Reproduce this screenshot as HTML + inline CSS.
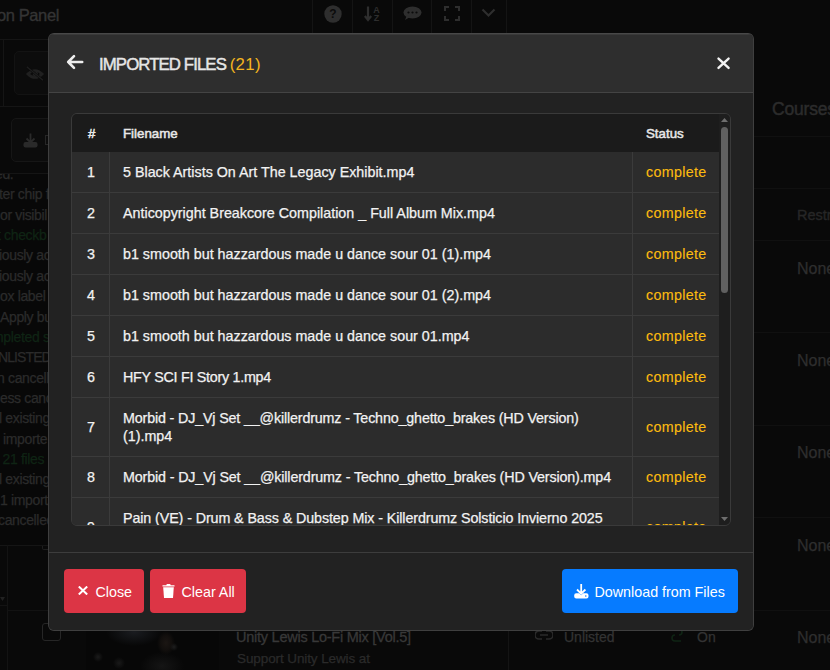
<!DOCTYPE html>
<html><head><meta charset="utf-8">
<style>
*{box-sizing:border-box;margin:0;padding:0}
html,body{width:830px;height:670px;overflow:hidden;background:#090909;font-family:"Liberation Sans",sans-serif}
.bg{position:absolute;left:0;top:0;width:830px;height:670px;overflow:hidden}
.abs{position:absolute;white-space:nowrap}
.log{position:absolute;left:0;top:174px;height:371px;background:#080808;width:48px;font-size:14px;line-height:20.37px;color:#2b2b2b;letter-spacing:-0.35px;-webkit-text-stroke:0.25px currentColor;white-space:nowrap;overflow:hidden}
.log div{height:20.37px}
.g{color:#0f2414}
.modal{position:absolute;left:48px;top:33px;width:706px;height:598px;border:1px solid #3f3f3f;border-top-color:#484848;border-radius:6px;background:#222;overflow:hidden}
.mh{position:absolute;left:0;top:0;width:704px;height:59px;background:#2e2e2e;border-bottom:1px solid #444;box-shadow:inset 0 1px 0 #3a3a3a}
.mf{position:absolute;left:0;top:518px;width:704px;height:79px;border-top:1px solid #3d3d3d;background:#222}
.tbl{position:absolute;left:22px;top:79px;width:660px;height:413px;border:1px solid #3a3a3a;border-radius:6px;overflow:hidden;background:#2b2b2b}
.th{position:absolute;left:0;top:0;width:647px;height:38px;background:#1b1b1b;color:#e8e8e8;font-size:13.3px;line-height:16px;-webkit-text-stroke:0.5px currentColor}
.row{position:absolute;left:0;width:647px;height:41px;background:#2c2c2c;border-bottom:1px solid #3b3b3b;color:#f2f2f2;font-size:14.3px;line-height:18px;-webkit-text-stroke:0.25px currentColor}
.row.tall{height:59px}
.c1{position:absolute;left:0;top:0;width:38px;height:100%;border-right:1px solid #3b3b3b}
.c1 span{position:absolute;left:15px;top:11px}
.fn{position:absolute;left:51px;top:11px;white-space:nowrap}
.c3{position:absolute;left:560px;top:0;width:88px;height:100%;border-left:1px solid #3b3b3b}
.c3 span{position:absolute;left:13px;top:11px;color:#fdbc0f;letter-spacing:0.3px;-webkit-text-stroke:0.1px currentColor}
.tall .c1 span,.tall .c3 span{top:20px}
.sb{position:absolute;left:647px;top:0;width:11px;height:411px;background:#1e1e1e}
.btn{position:absolute;top:16px;height:44px;border-radius:4px;color:#fff;font-size:14.3px;line-height:18px}
</style></head><body>
<div class="bg">
  <!-- top header of page -->
  <div class="abs" style="left:-3px;top:6px;font-size:16.5px;line-height:19px;color:#343434;letter-spacing:-0.4px;-webkit-text-stroke:0.35px #343434">on Panel</div>
  <div class="abs" style="left:312px;top:0;width:1px;height:33px;background:#141414"></div>
  <div class="abs" style="left:352px;top:0;width:1px;height:33px;background:#141414"></div>
  <div class="abs" style="left:392px;top:0;width:1px;height:33px;background:#141414"></div>
  <div class="abs" style="left:431px;top:0;width:1px;height:33px;background:#141414"></div>
  <div class="abs" style="left:471px;top:0;width:1px;height:33px;background:#141414"></div>
  <div class="abs" style="left:506px;top:0;width:1px;height:33px;background:#141414"></div>
  <svg class="abs" style="left:324px;top:5px" width="18" height="18" viewBox="0 0 18 18"><circle cx="9" cy="9" r="8.7" fill="#2e2e2e"/><text x="9" y="13.2" text-anchor="middle" font-family="Liberation Sans" font-weight="bold" font-size="12" fill="#0b0b0b">?</text></svg>
  <svg class="abs" style="left:364px;top:6px" width="18" height="16" viewBox="0 0 18 16"><path d="M4 0.5 V14 M0.8 10 L4 14 L7.2 10" stroke="#2e2e2e" stroke-width="2.2" fill="none"/><text x="12.5" y="7.3" text-anchor="middle" font-family="Liberation Sans" font-weight="bold" font-size="9" fill="#2e2e2e">A</text><text x="12.5" y="15" text-anchor="middle" font-family="Liberation Sans" font-weight="bold" font-size="9" fill="#2e2e2e">Z</text></svg>
  <svg class="abs" style="left:403px;top:6px" width="19" height="15" viewBox="0 0 19 15"><ellipse cx="9.5" cy="6.5" rx="9" ry="6" fill="#2e2e2e"/><path d="M2 14 L4 9 L7 11 Z" fill="#2e2e2e"/><circle cx="5.5" cy="6.5" r="1.1" fill="#0b0b0b"/><circle cx="9.5" cy="6.5" r="1.1" fill="#0b0b0b"/><circle cx="13.5" cy="6.5" r="1.1" fill="#0b0b0b"/></svg>
  <svg class="abs" style="left:444px;top:6px" width="16" height="15" viewBox="0 0 16 15"><path d="M1 5 V1 H5 M11 1 H15 V5 M15 10 V14 H11 M5 14 H1 V10" stroke="#2e2e2e" stroke-width="2" fill="none"/></svg>
  <svg class="abs" style="left:481px;top:8px" width="15" height="10" viewBox="0 0 15 10"><path d="M1.5 1.5 L7.5 7.5 L13.5 1.5" stroke="#2e2e2e" stroke-width="2.2" fill="none"/></svg>

  <!-- left panel -->
  <div class="abs" style="left:0;top:39px;width:48px;height:1px;background:#151515"></div>
  <div class="abs" style="left:3px;top:39px;width:1px;height:67px;background:#151515"></div>
  <div class="abs" style="left:0;top:106px;width:48px;height:1px;background:#151515"></div>
  <div class="abs" style="left:14px;top:51px;width:60px;height:44px;border:1px solid #131313;border-radius:5px;background:#0c0c0c"></div>
  <svg class="abs" style="left:26px;top:66px" width="18" height="15" viewBox="0 0 18 15"><path d="M1.8 8 Q9 1 16.2 8 Q9 15 1.8 8 Z" stroke="#202020" stroke-width="2.6" fill="none"/><circle cx="9.5" cy="8" r="2.6" fill="#202020"/><path d="M0.8 0.8 L17 14.2" stroke="#0c0c0c" stroke-width="2.2"/><path d="M0.8 0.8 L17 14.2" stroke="#1f1f1f" stroke-width="1.2"/></svg>
  <div class="abs" style="left:11px;top:118px;width:60px;height:44px;border:1px solid #161616;border-radius:5px;background:#0c0c0c"></div>
  <svg class="abs" style="left:23px;top:133px" width="15" height="15" viewBox="0 0 15 15"><path d="M7.5 0.5 V9 M3.5 5.5 L7.5 9.5 L11.5 5.5" stroke="#2a2a2a" stroke-width="1.8" fill="none"/><rect x="0.5" y="9" width="14" height="5.5" rx="2" fill="#2a2a2a"/></svg>
  <div class="abs" style="left:45px;top:135px;width:4px;height:10px;border:1.5px solid #262626;border-right:none"></div>
  <div class="abs" style="left:0;top:173px;width:48px;height:1px;background:#151515"></div>
  <div class="log">
    <div style="margin-left:-5px;margin-top:-10px">ed.</div>
    <div style="margin-left:-1px">ter chip f</div>
    <div>or visibil</div>
    <div class="g" style="margin-left:-3px">t checkb</div>
    <div style="margin-left:-1px">iously ac</div>
    <div style="margin-left:-1px">iously ac</div>
    <div>ox label f</div>
    <div>Apply bu</div>
    <div class="g" style="margin-left:-8px">mpleted s</div>
    <div style="margin-left:-2px;letter-spacing:-0.9px">NLISTED</div>
    <div style="margin-left:-3px">n cancell</div>
    <div>ess canc</div>
    <div style="margin-left:-1px">l existing</div>
    <div style="margin-left:3px">importe</div>
    <div class="g" style="margin-left:-1px">&nbsp;21 files</div>
    <div style="margin-left:-1px">l existing</div>
    <div>1 import</div>
    <div style="margin-left:-2px">cancelled</div>
  </div>

  <div class="abs" style="left:0;top:545px;width:48px;height:1px;background:#151515"></div>
  <div class="abs" style="left:7px;top:545px;width:1px;height:125px;background:#131313"></div>
  <div class="abs" style="left:0;top:605px;width:7px;height:1px;background:#131313"></div>
  <div class="abs" style="left:7px;top:610px;width:41px;height:1px;background:#121212"></div>
  <svg class="abs" style="left:0;top:597px" width="5" height="4" viewBox="0 0 5 4"><path d="M0 0 H5 L2.5 4 Z" fill="#222"/></svg>
  <div class="abs" style="left:42px;top:546px;width:8px;height:4px;border:1px solid #1e1e1e;border-top:none;border-radius:0 0 0 2px"></div>
  <!-- right -->
  <div class="abs" style="left:772px;top:99px;font-size:17.5px;color:#2c2c2c;-webkit-text-stroke:0.45px #2c2c2c;letter-spacing:-0.2px">Courses</div>
  <div class="abs" style="left:754px;top:136px;width:76px;height:1px;background:#101010"></div>
  <div class="abs" style="left:754px;top:188px;width:76px;height:1px;background:#101010"></div>
  <div class="abs" style="left:797px;top:207px;font-size:14.5px;color:#262626;-webkit-text-stroke:0.4px #262626">Restr</div>
  <div class="abs" style="left:754px;top:240px;width:76px;height:1px;background:#101010"></div>
  <div class="abs" style="left:797px;top:260px;font-size:16px;color:#2e2e2e;-webkit-text-stroke:0.25px #2e2e2e">None</div>
  <div class="abs" style="left:754px;top:332px;width:76px;height:1px;background:#101010"></div>
  <div class="abs" style="left:797px;top:352px;font-size:16px;color:#2e2e2e;-webkit-text-stroke:0.25px #2e2e2e">None</div>
  <div class="abs" style="left:754px;top:425px;width:76px;height:1px;background:#101010"></div>
  <div class="abs" style="left:797px;top:444px;font-size:16px;color:#2e2e2e;-webkit-text-stroke:0.25px #2e2e2e">None</div>
  <div class="abs" style="left:754px;top:517px;width:76px;height:1px;background:#101010"></div>
  <div class="abs" style="left:797px;top:537px;font-size:16px;color:#2e2e2e;-webkit-text-stroke:0.25px #2e2e2e">None</div>
  <div class="abs" style="left:754px;top:610px;width:76px;height:1px;background:#101010"></div>
  <div class="abs" style="left:797px;top:629px;font-size:16px;color:#2e2e2e;-webkit-text-stroke:0.25px #2e2e2e">None</div>

  <!-- bottom row -->
  <div class="abs" style="left:42px;top:623px;width:19px;height:18px;border:1.5px solid #262626;border-radius:3px"></div>
  <div class="abs" style="left:86px;top:600px;width:133px;height:70px;background:radial-gradient(circle at 12px 57px,#1b1b1b 0,rgba(30,30,30,0) 5px),radial-gradient(circle at 33px 63px,#191919 0,rgba(30,30,30,0) 6px),radial-gradient(circle at 88px 47px,#1e1e1e 0,rgba(30,30,30,0) 4px),radial-gradient(ellipse 9px 12px at 80px 43px,#1b1613 0,#120f0d 60%,rgba(18,15,13,0) 100%),radial-gradient(ellipse 22px 14px at 76px 66px,#151515 0,rgba(20,20,20,0) 100%),radial-gradient(ellipse 28px 14px at 48px 32px,#1a1c20 0,rgba(26,28,32,0) 100%),#070707"></div>
  <div class="abs" style="left:236px;top:629px;font-size:14.5px;line-height:17px;letter-spacing:-0.25px;color:#383838;-webkit-text-stroke:0.3px #383838">Unity Lewis Lo-Fi Mix [Vol.5]</div>
  <div class="abs" style="left:237px;top:650px;font-size:13.5px;line-height:17px;letter-spacing:-0.1px;color:#2a2a2a;-webkit-text-stroke:0.25px #2a2a2a">Support Unity Lewis at</div>
  <div class="abs" style="left:508px;top:600px;width:1px;height:70px;background:#141414"></div>
  <svg class="abs" style="left:535px;top:630px" width="18" height="10" viewBox="0 0 18 10"><path d="M7 1 H4 A4 4 0 0 0 4 9 H7 M11 1 H14 A4 4 0 0 1 14 9 H11 M5 5 H13" stroke="#2a2a2a" stroke-width="1.6" fill="none"/></svg>
  <div class="abs" style="left:564px;top:629px;font-size:14px;line-height:17px;color:#333;-webkit-text-stroke:0.25px #333">Unlisted</div>
  <svg class="abs" style="left:671px;top:627px" width="12" height="16" viewBox="0 0 12 16"><path d="M2 2 H8 A3 3 0 0 1 8 8 M10 14 H4 A3 3 0 0 1 4 8" stroke="#0f2414" stroke-width="1.6" fill="none"/></svg>
  <div class="abs" style="left:697px;top:629px;font-size:14px;line-height:17px;color:#333;-webkit-text-stroke:0.25px #333">On</div>
</div>

<div class="modal">
  <div class="mh">
    <svg class="abs" style="left:17px;top:20px" width="18" height="16" viewBox="0 0 18 16"><path d="M8 2.2 L2.2 8 L8 13.8 M2.2 8 L16.2 8" stroke="#eee" stroke-width="2.6" fill="none" stroke-linecap="round" stroke-linejoin="round"/></svg>
    <div class="abs" style="left:50px;top:21px;font-size:16.8px;line-height:20px;color:#e6e6e6;letter-spacing:-0.9px;-webkit-text-stroke:0.45px #e6e6e6">IMPORTED FILES <span style="color:#f4b51f;-webkit-text-stroke:0;letter-spacing:0.3px">(21)</span></div>
    <svg class="abs" style="left:667px;top:22px" width="15" height="14" viewBox="0 0 15 14"><path d="M2.5 2.6 L12.6 11.9 M12.6 2.6 L2.5 11.9" stroke="#f2f2f2" stroke-width="2.4" stroke-linecap="round"/></svg>
  </div>
  <div class="tbl">
    <div class="th">
      <div class="abs" style="left:16px;top:12px">#</div>
      <div class="abs" style="left:51px;top:12px">Filename</div>
      <div class="abs" style="left:574px;top:12px">Status</div>
    </div>
    <div class="row" style="top:38px"><div class="c1"><span>1</span></div><div class="fn">5 Black Artists On Art The Legacy Exhibit.mp4</div><div class="c3"><span>complete</span></div></div>
    <div class="row" style="top:79px"><div class="c1"><span>2</span></div><div class="fn">Anticopyright Breakcore Compilation _ Full Album Mix.mp4</div><div class="c3"><span>complete</span></div></div>
    <div class="row" style="top:120px"><div class="c1"><span>3</span></div><div class="fn">b1 smooth but hazzardous made u dance sour 01 (1).mp4</div><div class="c3"><span>complete</span></div></div>
    <div class="row" style="top:161px"><div class="c1"><span>4</span></div><div class="fn">b1 smooth but hazzardous made u dance sour 01 (2).mp4</div><div class="c3"><span>complete</span></div></div>
    <div class="row" style="top:202px"><div class="c1"><span>5</span></div><div class="fn">b1 smooth but hazzardous made u dance sour 01.mp4</div><div class="c3"><span>complete</span></div></div>
    <div class="row" style="top:243px"><div class="c1"><span>6</span></div><div class="fn" style="letter-spacing:-0.27px">HFY SCI FI Story 1.mp4</div><div class="c3"><span>complete</span></div></div>
    <div class="row tall" style="top:284px"><div class="c1"><span>7</span></div><div class="fn"><span style="letter-spacing:-0.155px">Morbid - DJ_Vj Set __@killerdrumz - Techno_ghetto_brakes (HD Version)</span><br>(1).mp4</div><div class="c3"><span>complete</span></div></div>
    <div class="row" style="top:343px"><div class="c1"><span>8</span></div><div class="fn" style="letter-spacing:-0.14px">Morbid - DJ_Vj Set __@killerdrumz - Techno_ghetto_brakes (HD Version).mp4</div><div class="c3"><span>complete</span></div></div>
    <div class="row tall" style="top:384px"><div class="c1"><span>9</span></div><div class="fn" style="letter-spacing:-0.1px">Pain (VE) - Drum &amp; Bass &amp; Dubstep Mix - Killerdrumz Solsticio Invierno 2025<br>Mix.mp4</div><div class="c3"><span>complete</span></div></div>
    <div class="sb">
      <svg class="abs" style="left:2px;top:4px" width="7" height="4" viewBox="0 0 7 4"><path d="M0 4 L3.5 0 L7 4 Z" fill="#6e6e6e"/></svg>
      <div class="abs" style="left:2px;top:13px;width:7px;height:166px;border-radius:3.5px;background:#606060"></div>
      <svg class="abs" style="left:2px;top:403px" width="7" height="4" viewBox="0 0 7 4"><path d="M0 0 L7 0 L3.5 4 Z" fill="#6e6e6e"/></svg>
    </div>
  </div>
  <div class="mf">
    <div class="btn" style="left:15px;width:80px;background:#dc3545">
      <svg class="abs" style="left:14px;top:17px" width="10" height="9" viewBox="0 0 10 9"><path d="M0.8 0.5 L9.2 8.5 M9.2 0.5 L0.8 8.5" stroke="#fff" stroke-width="2"/></svg>
      <div class="abs" style="left:31.5px;top:14px">Close</div>
    </div>
    <div class="btn" style="left:101px;width:96px;background:#dc3545">
      <svg class="abs" style="left:11.5px;top:15px" width="13" height="14" viewBox="0 0 13 14"><path d="M0.5 1.2 H4.3 L4.8 0 H8.2 L8.7 1.2 H12.5 V2.5 H0.5 Z" fill="#fff"/><path d="M1.2 3.2 H11.8 L11 14 H2 Z" fill="#fff"/></svg>
      <div class="abs" style="left:31.5px;top:14px">Clear All</div>
    </div>
    <div class="btn" style="left:513px;width:176px;background:#067bff">
      <svg class="abs" style="left:12px;top:15px" width="15" height="15" viewBox="0 0 15 15"><path d="M7.2 0 V9.5 M3 5.5 L7.2 9.7 L11.4 5.5" stroke="#fff" stroke-width="1.8" fill="none"/><path d="M2.2 9.2 H5.2 L7.2 11.2 L9.2 9.2 H12.5 A2 2 0 0 1 14.5 11.2 V12.6 A2 2 0 0 1 12.5 14.6 H2.2 A2 2 0 0 1 0.2 12.6 V11.2 A2 2 0 0 1 2.2 9.2 Z" fill="#fff"/><circle cx="11.8" cy="12" r="0.8" fill="#067bff"/></svg>
      <div class="abs" style="left:32.5px;top:14px">Download from Files</div>
    </div>
  </div>
</div>
</body></html>
